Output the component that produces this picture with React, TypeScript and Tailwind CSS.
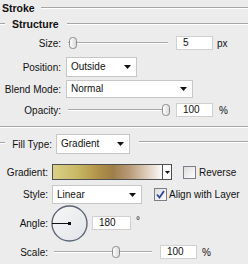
import React from "react";

const Line = ({ className = "" }: { className?: string }) => (
  <div className={`h-0 border-t border-t-[#a6a6a6] border-b border-b-white ${className}`} />
);

const Arrow = () => (
  <svg width="7" height="4" viewBox="0 0 7 4" className="shrink-0">
    <polygon points="0,0 7,0 3.5,4" fill="#111" />
  </svg>
);

const Thumb = ({ left }: { left: number }) => (
  <svg
    width="8"
    height="12"
    viewBox="0 0 8 12"
    className="absolute top-[1px]"
    style={{ left }}
  >
    <defs>
      <linearGradient id="tg" x1="0" y1="0" x2="1" y2="0">
        <stop offset="0" stopColor="#ffffff" />
        <stop offset="1" stopColor="#d8d8d8" />
      </linearGradient>
    </defs>
    <rect x="0.5" y="0.5" width="7" height="11" rx="3" fill="url(#tg)" stroke="#8a8a8a" />
  </svg>
);

const Slider = ({ w, thumb }: { w: number; thumb: number }) => (
  <div className="relative h-[14px] shrink-0" style={{ width: w }}>
    <div className="absolute left-0 right-0 top-[6px] h-0 border-t border-t-[#a9a9a9] border-b border-b-white" />
    <Thumb left={thumb} />
  </div>
);

const Input = ({ value, w }: { value: string; w: string }) => (
  <div
    className={`${w} h-[14px] bg-white border border-[#d0d0d0] pl-[6px] flex items-center leading-none shrink-0`}
  >
    {value}
  </div>
);

const Select = ({ value, w, h }: { value: string; w: string; h: string }) => (
  <div
    className={`${w} ${h} bg-white border border-[#c6c6c6] flex items-center pl-[4px] pr-[5px] shrink-0`}
  >
    <span className="flex-1 leading-none">{value}</span>
    <Arrow />
  </div>
);

const Check = ({ checked }: { checked?: boolean }) => (
  <svg width="13" height="13" viewBox="0 0 13 13" className="shrink-0">
    <defs>
      <linearGradient id="cg" x1="0" y1="0" x2="1" y2="1">
        <stop offset="0" stopColor="#dcdcdc" />
        <stop offset="1" stopColor="#ffffff" />
      </linearGradient>
    </defs>
    <rect x="0.5" y="0.5" width="12" height="12" fill="url(#cg)" stroke="#7a7f8a" />
    {checked && (
      <polyline points="3,6.5 5.5,9.5 10,3" fill="none" stroke="#2c4a9a" strokeWidth="1.8" />
    )}
  </svg>
);

export default function App() {
  return (
    <div className="w-[248px] h-[264px] bg-[#ececec] overflow-hidden text-[10px] text-[#111] font-['Liberation_Sans',Arial,sans-serif] flex flex-col">
      {/* Stroke header */}
      <div className="h-[16px] flex items-center shrink-0">
        <span className="ml-[2px] font-bold text-[10.5px] leading-none">Stroke</span>
        <Line className="flex-1 ml-[6px]" />
      </div>
      {/* Structure header */}
      <div className="h-[16px] flex items-center shrink-0">
        <Line className="w-[5px]" />
        <span className="ml-[7px] font-bold text-[10.5px] leading-none">Structure</span>
        <Line className="flex-1 ml-[8px]" />
      </div>

      {/* Size */}
      <div className="mt-[4px] h-[14px] flex items-center shrink-0">
        <span className="w-[61px] text-right">Size:</span>
        <div className="ml-[7px]">
          <Slider w={100} thumb={1} />
        </div>
        <div className="ml-[8px]">
          <Input value="5" w="w-[37px]" />
        </div>
        <span className="ml-[4px]">px</span>
      </div>

      {/* Position */}
      <div className="mt-[7px] h-[20px] flex items-center shrink-0">
        <span className="w-[61px] text-right">Position:</span>
        <div className="ml-[5px]">
          <Select value="Outside" w="w-[71px]" h="h-[20px]" />
        </div>
      </div>

      {/* Blend Mode */}
      <div className="mt-[3px] h-[18px] flex items-center shrink-0">
        <span className="w-[61px] text-right">Blend Mode:</span>
        <div className="ml-[5px]">
          <Select value="Normal" w="w-[127px]" h="h-[18px]" />
        </div>
      </div>

      {/* Opacity */}
      <div className="mt-[5px] h-[14px] flex items-center shrink-0">
        <span className="w-[61px] text-right">Opacity:</span>
        <div className="ml-[7px]">
          <Slider w={100} thumb={94} />
        </div>
        <div className="ml-[8px]">
          <Input value="100" w="w-[37px]" />
        </div>
        <span className="ml-[6px]">%</span>
      </div>

      {/* Separator */}
      <Line className="mt-[9px] w-full shrink-0" />

      {/* Fill Type */}
      <div className="mt-[6px] h-[20px] flex items-start shrink-0">
        <div className="w-[52px] h-[20px] flex items-center">
          <Line className="w-[5px] -mt-[2px]" />
          <span className="ml-auto">Fill Type:</span>
        </div>
        <div className="ml-[4px]">
          <Select value="Gradient" w="w-[74px]" h="h-[20px]" />
        </div>
        <Line className="flex-1 ml-[9px] mt-[7px]" />
      </div>

      {/* Gradient */}
      <div className="mt-[10px] h-[16px] flex items-center shrink-0">
        <span className="w-[48px] text-right">Gradient:</span>
        <div className="ml-[4px] w-[120px] h-[16px] border border-[#4e4e4e] flex shrink-0">
          <div className="flex-1 bg-[linear-gradient(to_right,#d9d088_0%,#c9b865_22%,#b09048_42%,#9f7e4a_55%,#b99a78_70%,#dccab8_85%,#fbfaf8_100%)]" />
          <div className="w-[9px] bg-white border-l border-[#4e4e4e] flex items-center justify-center">
            <svg width="5" height="3" viewBox="0 0 5 3">
              <polygon points="0,0 5,0 2.5,3" fill="#111" />
            </svg>
          </div>
        </div>
        <div className="ml-[11px]">
          <Check />
        </div>
        <span className="ml-[3px]">Reverse</span>
      </div>

      {/* Style */}
      <div className="mt-[5px] h-[19px] flex items-center shrink-0">
        <span className="w-[48px] text-right">Style:</span>
        <div className="ml-[4px]">
          <Select value="Linear" w="w-[90px]" h="h-[19px]" />
        </div>
        <div className="ml-[12px]">
          <Check checked />
        </div>
        <span className="ml-[2px]">Align with Layer</span>
      </div>

      {/* Angle */}
      <div className="mt-[1px] h-[36px] flex items-center shrink-0">
        <span className="w-[48px] text-right">Angle:</span>
        <svg width="37" height="37" viewBox="0 0 37 37" className="ml-[3px] shrink-0">
          <defs>
            <linearGradient id="ag" x1="0" y1="0" x2="1" y2="1">
              <stop offset="0" stopColor="#f7f7f7" />
              <stop offset="1" stopColor="#e2e4e8" />
            </linearGradient>
          </defs>
          <circle cx="18.5" cy="18.5" r="17.5" fill="url(#ag)" stroke="#5d6677" strokeWidth="1.4" />
          <line x1="1" y1="18.5" x2="18.5" y2="18.5" stroke="#111" strokeWidth="1" />
          <rect x="17" y="17" width="3" height="3" fill="#111" />
        </svg>
        <div className="ml-[4px]">
          <Input value="180" w="w-[39px]" />
        </div>
        <span className="ml-[5px] self-start mt-[11px] leading-none">°</span>
      </div>

      {/* Scale */}
      <div className="mt-[3px] h-[16px] flex items-center shrink-0">
        <span className="w-[48px] text-right">Scale:</span>
        <div className="ml-[6px]">
          <Slider w={98} thumb={58} />
        </div>
        <div className="ml-[8px]">
          <Input value="100" w="w-[37px]" />
        </div>
        <span className="ml-[5px]">%</span>
      </div>
    </div>
  );
}
